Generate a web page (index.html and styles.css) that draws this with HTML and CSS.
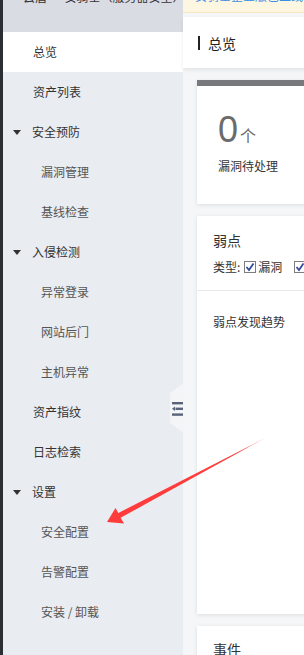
FILE: index.html
```html
<!DOCTYPE html>
<html>
<head>
<meta charset="utf-8">
<link rel="stylesheet" href="styles.css">
</head>
<body>
<div class="app">
	<div class="rail"></div>
	<aside class="sidebar">
		<div class="brand"><span>云盾 · 安骑士（服务器安全）</span></div>
		<ul class="menu">
			<li class="item active">总览</li>
			<li class="item">资产列表</li>
			<li class="item group"><i class="caret"></i>安全预防</li>
			<li class="item sub">漏洞管理</li>
			<li class="item sub">基线检查</li>
			<li class="item group"><i class="caret"></i>入侵检测</li>
			<li class="item sub">异常登录</li>
			<li class="item sub">网站后门</li>
			<li class="item sub">主机异常</li>
			<li class="item">资产指纹</li>
			<li class="item">日志检索</li>
			<li class="item group"><i class="caret"></i>设置</li>
			<li class="item sub">安全配置</li>
			<li class="item sub">告警配置</li>
			<li class="item sub">安装 / 卸载</li>
		</ul>
	</aside>
	<main class="main">
		<div class="toggle">
			<svg width="11" height="14" viewBox="0 0 11 14">
				<rect x="0" y="0" width="11" height="2.4" fill="#59647a"/>
				<rect x="3.5" y="5.6" width="7.5" height="2.4" fill="#59647a"/>
				<path d="M0 6.8 L3 4.6 L3 9 Z" fill="#59647a"/>
				<rect x="0" y="11.4" width="11" height="2.4" fill="#59647a"/>
			</svg>
		</div>
		<div class="notice"><span>安骑士企业版已上线，立即升级享受更全面的服务器安全防护</span></div>
		<div class="page-head"><h2>总览</h2></div>
		<div class="content">
			<section class="card stat">
				<div class="count">0<small>个</small></div>
				<p class="label">漏洞待处理</p>
			</section>
			<section class="card weak">
				<div class="card-head">
					<h3>弱点</h3>
					<div class="filter">
						类型:
						<span class="check first"><svg width="10" height="10" viewBox="0 0 10 10"><path d="M1.5 5 L4 8 L8.5 1.5" stroke="#2f4c9c" stroke-width="1.8" fill="none"/></svg></span>漏洞
						<span class="check gap"><svg width="10" height="10" viewBox="0 0 10 10"><path d="M1.5 5 L4 8 L8.5 1.5" stroke="#2f4c9c" stroke-width="1.8" fill="none"/></svg></span>基线
					</div>
				</div>
				<p class="trend">弱点发现趋势</p>
			</section>
			<section class="card event">
				<h3>事件</h3>
			</section>
		</div>
	</main>
	<svg class="arrow" width="304" height="655" viewBox="0 0 304 655">
		<defs>
			<linearGradient id="fade" x1="268" y1="436" x2="107" y2="522" gradientUnits="userSpaceOnUse">
				<stop offset="0" stop-color="#ff3b3b" stop-opacity="0.2"/>
				<stop offset="0.15" stop-color="#ff3b3b"/>
				<stop offset="1" stop-color="#ff3b3b"/>
			</linearGradient>
		</defs>
		<polygon points="107,522 115.5,508 118.3,513 268,436.5 120.6,517.8 124,523.5" fill="url(#fade)"/>
	</svg>
</div>
</body>
</html>
```

FILE: styles.css
```css
*{
	margin: 0;
	padding: 0;
	box-sizing: border-box;
}
body{
	font-family: "Noto Sans CJK SC", "Liberation Sans", sans-serif;
	font-size: 12px;
	color: #333333;
	background: #f5f6f8;
}
.app{
	position: relative;
	display: flex;
	height: 655px;
	overflow: hidden;
}
.rail{
	width: 3px;
	background: #2b2f33;
}
.sidebar{
	width: 180px;
	background: #e9ecf1;
}
.brand{
	height: 32px;
	background: #d9dce3;
	overflow: hidden;
	padding-left: 20px;
	white-space: nowrap;
}
.brand span{
	display: block;
	margin-top: -9px;
	line-height: 12px;
	font-size: 12px;
	color: #333333;
}
.menu{
	list-style-type: none;
}
.item{
	height: 40px;
	line-height: 40px;
	padding-left: 30px;
	font-size: 12px;
	color: #333333;
	display: flex;
	align-items: center;
}
.item.active{
	background: #ffffff;
}
.item.group{
	padding-left: 10px;
}
.item.sub{
	padding-left: 38px;
	color: #555555;
}
.caret{
	width: 0;
	height: 0;
	border-left: 4.5px solid transparent;
	border-right: 4.5px solid transparent;
	border-top: 5px solid #333333;
	margin-right: 11px;
}
.main{
	position: relative;
	flex: 1;
	min-width: 0;
	background: #f5f6f8;
}
.toggle{
	position: absolute;
	left: -13px;
	top: 383px;
	width: 14px;
	height: 50px;
	background: #f4f5f7;
	clip-path: polygon(0 10px, 100% 0, 100% 100%, 0 40px);
	padding: 19px 0 0 2px;
}
.toggle svg{
	display: block;
}
.notice{
	height: 13px;
	background: #fdf6e1;
	border-bottom: 1px solid #f6e7c1;
	overflow: hidden;
	padding-left: 12px;
	white-space: nowrap;
}
.notice span{
	display: block;
	margin-top: -10px;
	line-height: 12px;
	color: #3a8ee6;
}
.page-head{
	margin-top: 4px;
	height: 51px;
	width: 600px;
	background: #ffffff;
	box-shadow: 0 2px 4px rgba(0,0,0,0.08);
	padding-left: 15px;
	display: flex;
	align-items: center;
}
.page-head h2{
	font-size: 14px;
	font-weight: normal;
	line-height: 14px;
	color: #222222;
	border-left: 2px solid #222222;
	padding-left: 8px;
}
.content{
	padding: 12px 0 0 14px;
	width: 700px;
}
.card{
	background: #ffffff;
	box-shadow: 0 1px 4px rgba(0,0,0,0.1);
	margin-bottom: 12px;
}
.stat{
	height: 124px;
	border-top: 6px solid #77797c;
	padding: 26px 0 0 21px;
}
.count{
	font-family: "Liberation Sans", sans-serif;
	font-size: 36px;
	line-height: 36px;
	color: #6b6b6b;
}
.count small{
	font-family: "Noto Sans CJK SC", sans-serif;
	font-size: 16px;
	margin-left: 2px;
}
.label{
	margin-top: 5px;
	line-height: 16px;
	font-size: 12px;
	color: #333333;
}
.weak{
	height: 398px;
}
.card-head{
	padding: 14px 16px 13px 16px;
	border-bottom: 1px solid #e8e8e8;
}
.card-head h3, .event h3{
	font-size: 14px;
	font-weight: normal;
	line-height: 20px;
	color: #333333;
}
.filter{
	margin-top: 7px;
	line-height: 20px;
	color: #333333;
	display: flex;
	align-items: center;
	white-space: nowrap;
}
.check{
	display: inline-flex;
	align-items: center;
	justify-content: center;
	width: 12px;
	height: 12px;
	border: 1px solid #7d7d7d;
	background: #ffffff;
	margin: 0 2px 0 1px;
}
.check.first{
	margin-left: 4px;
}
.check.gap{
	margin-left: 12px;
}
.trend{
	padding: 23px 0 0 16px;
	line-height: 16px;
	color: #333333;
}
.event{
	height: 60px;
	padding: 13px 16px 0 16px;
}
.arrow{
	position: absolute;
	left: 0;
	top: 0;
	pointer-events: none;
}
```
